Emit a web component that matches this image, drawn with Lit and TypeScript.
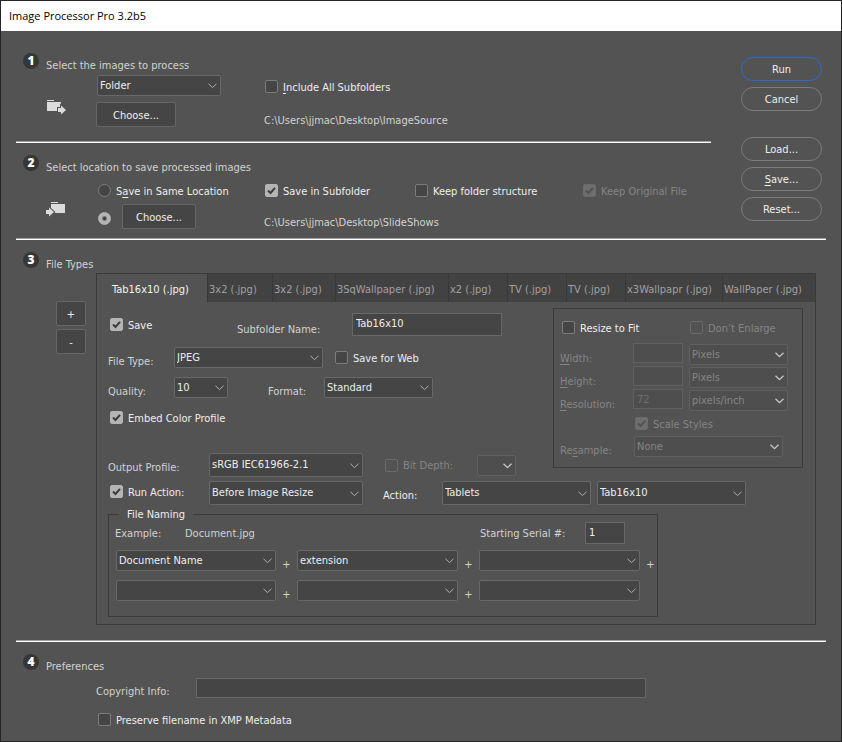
import { LitElement, html, css, svg, nothing, TemplateResult } from "lit";
import { customElement, state } from "lit/decorators.js";

interface Tab { label: string; share: number; }

const TABS: Tab[] = [
  { label: "Tab16x10 (.jpg)", share: 110 },
  { label: "3x2 (.jpg)", share: 65 },
  { label: "3x2 (.jpg)", share: 63 },
  { label: "3SqWallpaper (.jpg)", share: 113 },
  { label: "x2 (.jpg)", share: 59 },
  { label: "TV (.jpg)", share: 59 },
  { label: "TV (.jpg)", share: 59 },
  { label: "x3Wallpapr (.jpg)", share: 97 },
  { label: "WallPaper (.jpg)", share: 93 },
];

const chevron = html`<svg class="chevron" viewBox="0 0 9 6" aria-hidden="true"><path d="M0.5 0.8 L4.5 4.6 L8.5 0.8" /></svg>`;

const select = (name: string, value: string, size: string, disabled = false) => html`
  <span class="select ${size}">
    <select aria-label=${name} ?disabled=${disabled}><option>${value}</option></select>${chevron}
  </span>`;

const check = (label: TemplateResult | string, checked = false, disabled = false, cls = "") => html`
  <label class="check ${cls}">
    <input type="checkbox" .checked=${checked} ?disabled=${disabled} />
    <svg class="tick" viewBox="0 0 13 13" aria-hidden="true"><path d="M3 6.5 L5.5 9 L10 3.8" /></svg>
    <span>${label}</span>
  </label>`;

const heading = (n: number, title: string) => html`
  <div class="heading"><span class="badge">${n}</span><h2>${title}</h2></div>`;

const folderOut = svg`<svg class="folder" viewBox="0 0 20 16" aria-hidden="true">
  <path d="M1 1H8V2H1Z M1 3H15V12H1Z" />
  <path class="arrow" d="M12 9H15V6.5L20 11L15 15.5V13H12Z" /></svg>`;

const folderIn = svg`<svg class="folder" viewBox="0 0 20 16" aria-hidden="true">
  <path d="M5 1H12V2H5Z M5 3H19V12H5Z" />
  <path class="arrow" d="M0 9H3V6.5L8 11L3 15.5V13H0Z" /></svg>`;

@customElement("app-root")
export class AppRoot extends LitElement {
  @state() private active = 0;

  static styles = css`
    :host {
      display: block;
      box-sizing: border-box;
      min-height: 100vh;
      border: 1px solid #252525;
      background: #535353;
      color: #d2d2d2;
      font: 11px/16px "DejaVu Sans Condensed", "Noto Sans", sans-serif;
    }
    *, *::before, *::after { box-sizing: border-box; }
    h1, h2 { margin: 0; font: inherit; }
    header { padding: 7px 8px; background: #fff; color: #000; }
    header h1 { font: 11px/16px "Open Sans", "Noto Sans", sans-serif; }
    main { padding: 0 15px; }
    .top { display: grid; grid-template-columns: minmax(0, 1fr) 81px; column-gap: 30px; padding-right: 4px; }
    .rule { height: 2px; border: 0; margin: 0; background: #fff; border-top: 1px solid #a0a0a0; }
    section { padding-top: 12px; }
    section.first { padding-top: 22px; }
    .heading { display: flex; gap: 7px; height: 20px; padding-left: 7px; }
    .heading h2 { align-self: flex-end; height: 16px; line-height: 18px; }
    .badge {
      width: 16px; height: 16px; border-radius: 50%; background: #363636; color: #fff;
      font: 800 12px/16px "Open Sans", sans-serif; text-align: center;
    }
    button, input, select { font: inherit; color: #eee; margin: 0; }
    button { padding: 2px 0 0; border: 1px solid #666; border-radius: 2px; background: #454545; height: 25px; }
    .actions { display: flex; flex-direction: column; gap: 6px; padding-top: 26px; }
    .actions button { height: 24px; border-radius: 12px; border-color: #7c7c7c; background: transparent; }
    .actions button.primary { border-color: #2a6bd6; }
    .actions .second { margin-top: 20px; }

    .source { display: grid; grid-template-columns: 50px 168px 150px 1fr; padding-left: 30px; }
    .source.from { grid-template-rows: 21px 25px; row-gap: 6px; padding-top: 2px; padding-bottom: 14px; }
    .source.to { grid-template-rows: 21px 25px; row-gap: 3px; padding-top: 5px; padding-bottom: 9px; }
    .source > * { align-self: center; }
    .source.from > .check { align-self: end; margin-bottom: 3px; }
    .source > .path { align-self: end; grid-column: 3 / span 2; height: 16px; line-height: 20px; }
    .source > .folder { grid-row: 1 / span 2; grid-column: 1; align-self: end; margin-bottom: 12px; }
    .col2 { grid-column: 2; }
    .choose { width: 80px; }
    .indent { padding-left: 1px; }
    .keep { width: 169px; }
    .split { display: flex; align-items: center; gap: 11px; padding-left: 2px; }
    .split .choose { width: 74px; }
    .split .lower { margin-top: 4px; }
    .folder { width: 20px; height: 16px; fill: #dcdcdc; }
    .arrow { stroke: #535353; paint-order: stroke; stroke-width: 2; }

    .check { display: inline-flex; align-items: center; gap: 5px; color: #eee; position: relative; white-space: nowrap; height: 13px; }
    .check > span { padding-top: 2px; }
    .check input {
      appearance: none; flex: none; width: 13px; height: 13px; border: 1px solid #7c7c7c;
      border-radius: 2px; background: #454545;
    }
    .check input:checked { background: #b4b4b4; border-color: #b4b4b4; }
    .check input:disabled { background: transparent; border-color: #6a6a6a; }
    .check input:disabled:checked { background: #6e6e6e; }
    .check input:disabled ~ span { color: #858585; }
    .tick { position: absolute; top: 0; width: 13px; height: 13px; fill: none; stroke: #3c3c3c; stroke-width: 2; visibility: hidden; pointer-events: none; }
    .check input:checked + .tick { visibility: visible; }
    .check input:disabled + .tick { stroke: #525252; }
    .check input[type="radio"] { border-radius: 50%; }
    .check input[type="radio"]:checked { background: radial-gradient(circle, #3c3c3c 1px, #b4b4b4 3px); }
    .u { text-decoration: underline; text-underline-offset: 2px; }

    .select { display: inline-flex; position: relative; height: 21px; }
    .select select {
      appearance: none; width: 100%; height: 100%; padding: 1px 18px 0 2px; border: 1px solid #686868;
      border-radius: 2px; background: #454545; text-overflow: clip;
    }
    .chevron { position: absolute; right: 4px; top: 8px; width: 9px; height: 6px; fill: none; stroke: #b0b0b0; pointer-events: none; }
    .select select:disabled { background: #4e4e4e; border-color: #606060; color: #858585; opacity: 1; }
    .select select:disabled + .chevron { stroke: #c8c8c8; stroke-width: 1.3; }
    .select.tall { height: 24px; }
    .select.tall select { padding-top: 0; }
    .tall .chevron { top: 10px; }
    .w124 { width: 124px; } .w149 { width: 149px; } .w54 { width: 54px; } .w109 { width: 109px; }
    .w154 { width: 154px; } .w39 { width: 39px; } .w99 { width: 99px; } .fill { width: 100%; }

    .text { border: 1px solid #686868; background: #454545; padding: 0 3px; height: 23px; min-width: 0; }
    .text:disabled { background: #4e4e4e; border-color: #606060; color: #6e6e6e; }

    .types { display: grid; grid-template-columns: 30px minmax(0, 1fr); column-gap: 10px; padding: 1px 10px 15px 40px; }
    .side { display: flex; flex-direction: column; gap: 3px; padding-top: 28px; }
    .panel { border: 1px solid #3a3a3a; padding-bottom: 7px; }
    .tabs { display: grid; height: 28px; }
    .tabs button {
      min-width: 0; height: 28px; text-align: left;
      white-space: nowrap; border: 0; border-left: 1px solid #383838; border-radius: 0; padding: 3px 0 0 1px;
      background: #424242; color: #a0a0a0;
    }
    .tabs button[aria-selected="true"] { background: transparent; border-left: 0; padding-left: 15px; color: #f4f4f4; }
    .upper { display: flex; justify-content: space-between; padding: 0 12px 0 11px; }
    .left { padding-top: 11px; }
    .row { display: flex; align-items: center; }
    .lab { align-self: flex-end; white-space: nowrap; height: 16px; line-height: 20px; }
    .lab.up { line-height: 14px; }
    .b11 { margin-bottom: 11px; } .b9 { margin-bottom: 9px; } .b13 { margin-bottom: 13px; } .b29 { margin-bottom: 29px; }
    .save { width: 129px; padding-left: 2px; }
    .lab.sub { width: 115px; }
    .lab.short { width: 66px; }
    .lab.format { width: 56px; margin-left: 40px; }
    .lab.long { width: 101px; }
    .tick-in { margin-left: 12px; }
    .pad2 { padding-left: 2px; }
    .bright { color: #eee; }
    .subfolder { width: 150px; padding-bottom: 3px; }
    .depth { margin-left: 22px; width: 92px; }

    .resize { width: 250px; margin-top: 6px; align-self: flex-start; border: 1px solid #3a3a3a; padding: 12px 14px 10px 6px; }
    .size { display: grid; grid-template-columns: 73px 50px 105px; grid-auto-rows: 22px; row-gap: 1px; padding: 9px 0 6px; }
    .size .lab { align-self: end; }
    .size .text { height: 20px; width: 50px; }
    .size .select { align-self: end; margin-left: 6px; }
    .dim { color: #858585; }
    .opts { display: flex; padding-left: 2px; }
    .opts > :first-child { width: 128px; }
    .scale { display: flex; padding: 0 0 6px 75px; }
    .lab.res { width: 74px; }

    .action { padding: 0 12px 0 11px; margin-top: 4px; }
    .run { width: 101px; padding-left: 2px; align-self: flex-start; margin-top: 4px; }
    .lab.act { width: 59px; margin-left: 20px; }
    .gap6 { margin-left: 6px; }

    fieldset { margin: 1px 0 0 11px; width: 550px; padding: 0 17px 15px 6px; border: 1px solid #3a3a3a; min-width: 0; }
    legend { margin-left: 4px; padding: 0 8px; height: 16px; line-height: 18px; color: #eee; }
    .example { height: 22px; margin-bottom: 6px; }
    .example > span { padding-top: 2px; }
    .example > :nth-child(1) { width: 70px; }
    .example > :nth-child(2) { flex: 1; }
    .example .lab { width: 105px; align-self: center; line-height: 18px; }
    .serial { width: 40px; height: 22px; padding-bottom: 2px; margin-right: 15px; }
    .names { display: grid; grid-template-columns: 160px 21px 161px 21px 161px 21px; row-gap: 9px; margin: 0 -18px 0 1px; }
    .names .plus { text-align: center; align-self: end; line-height: 12px; height: 12px; }

    .prefs { padding: 4px 0 15px 80px; }
    .lab.copy { width: 100px; }
    .copyright { flex: 0 1 450px; height: 20px; }
    .prefs .row { margin-bottom: 15px; }
    .prefs .check { display: flex; padding-left: 2px; }
  `;

  render() {
    return html`
      <header><h1>Image Processor Pro 3.2b5</h1></header>
      <main>
        <div class="top">
          <div>
            <section class="first">
              ${heading(1, "Select the images to process")}
              <div class="source from">
                ${folderOut}
                <div class="col2 indent row">${select("Source", "Folder", "w124")}</div>
                ${check(html`<span class="u">I</span>nclude All Subfolders`, false, false, "indent")}
                <button class="choose col2">Choose...</button>
                <span class="path">C:\\Users\\jjmac\\Desktop\\ImageSource</span>
              </div>
            </section>
            <hr class="rule" />
            <section>
              ${heading(2, "Select location to save processed images")}
              <div class="source to">
                ${folderIn}
                <div class="split col2">
                  <label class="check"><input type="radio" name="dest" /><span>S<span class="u">a</span>ve in Same Location</span></label>
                </div>
                ${check("Save in Subfolder", true, false, "indent")}
                <div class="row">${check("Keep folder structure", false, false, "keep indent")}${check("Keep Original File", true, true, "orig")}</div>
                <div class="split col2">
                  <label class="check lower"><input type="radio" name="dest" checked aria-label="Save in chosen folder" /></label>
                  <button class="choose">Choose...</button>
                </div>
                <span class="path">C:\\Users\\jjmac\\Desktop\\SlideShows</span>
              </div>
            </section>
          </div>
          <div class="actions">
            <button class="primary">Run</button>
            <button>Cancel</button>
            <button class="second">Load...</button>
            <button><span class="u">S</span>ave...</button>
            <button>Reset...</button>
          </div>
        </div>
        <hr class="rule" />
        <section>
          ${heading(3, "File Types")}
          <div class="types">
            <div class="side"><button>+</button><button>-</button></div>
            <div class="panel">
              <div class="tabs" role="tablist" style="grid-template-columns:${TABS.map((t) => `minmax(0, ${t.share}fr)`).join(" ")}">
                ${TABS.map((t, i) => html`<button role="tab" aria-selected=${i === this.active ? "true" : "false"}
                  @click=${() => (this.active = i)}>${t.label}</button>`)}
              </div>
              <div class="upper">
                <div class="left">
                  <div class="row b11">
                    ${check("Save", true, false, "save")}
                    <label class="lab sub" for="sub">Subfolder Name:</label>
                    <input id="sub" class="text subfolder" .value=${"Tab16x10"} />
                  </div>
                  <div class="row b9">
                    <span class="lab short">File Type:</span>${select("File Type", "JPEG", "w149")}
                    ${check("Save for Web", false, false, "tick-in")}
                  </div>
                  <div class="row b13">
                    <span class="lab short">Quality:</span>${select("Quality", "10", "w54")}
                    <span class="lab format">Format:</span>${select("Format", "Standard", "w109")}
                  </div>
                  <div class="row b29">${check("Embed Color Profile", true, false, "pad2")}</div>
                  <div class="row">
                    <span class="lab long up">Output Profile:</span>${select("Output Profile", "sRGB IEC61966-2.1", "w154 tall")}
                    ${check("Bit Depth:", false, true, "depth")}${select("Bit Depth", "", "w39", true)}
                  </div>
                </div>
                <div class="resize">
                  <div class="opts">${check("Resize to Fit")}${check("Don\u2019t Enlarge", false, true)}</div>
                  <div class="size dim">
                    <label class="lab" for="w"><span class="u">W</span>idth:</label><input id="w" class="text" disabled />${select("Width unit", "Pixels", "w99", true)}
                    <label class="lab" for="h"><span class="u">H</span>eight:</label><input id="h" class="text" disabled />${select("Height unit", "Pixels", "w99", true)}
                    <label class="lab" for="r"><span class="u">R</span>esolution:</label><input id="r" class="text" disabled .value=${"72"} />${select("Resolution unit", "pixels/inch", "w99", true)}
                  </div>
                  <div class="scale">${check("Scale Styles", true, true)}</div>
                  <div class="row dim"><span class="lab res">Re<span class="u">s</span>ample:</span>${select("Resample", "None", "w149", true)}</div>
                </div>
              </div>
              <div class="row action">
                ${check("Run Action:", true, false, "run")}${select("Run Action", "Before Image Resize", "w154 tall")}
                <span class="lab act up bright">Action:</span>${select("Action set", "Tablets", "w149 tall")}
                ${select("Action", "Tab16x10", "w149 tall gap6")}
              </div>
              <fieldset>
                <legend>File Naming</legend>
                <div class="row example">
                  <span>Example:</span><span>Document.jpg</span>
                  <label class="lab" for="serial">Starting Serial #:</label>
                  <input id="serial" class="text serial" .value=${"1"} />
                </div>
                <div class="names">
                  ${["Document Name", "extension", "", "", "", ""].map((v, i) => html`
                    ${select(`Name part ${i + 1}`, v, "fill")}<span class="plus">${i < 5 ? "+" : nothing}</span>`)}
                </div>
              </fieldset>
            </div>
          </div>
        </section>
        <hr class="rule" />
        <section>
          ${heading(4, "Preferences")}
          <div class="prefs">
            <div class="row"><label class="lab copy" for="copy">Copyright Info:</label><input id="copy" class="text copyright" /></div>
            ${check("Preserve filename in XMP Metadata")}
          </div>
        </section>
      </main>`;
  }
}
